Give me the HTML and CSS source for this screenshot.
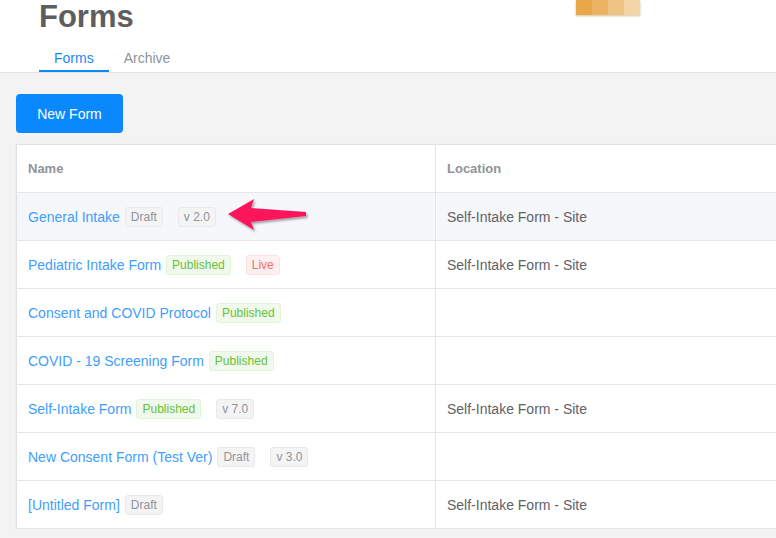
FILE: index.html
```html
<!DOCTYPE html>
<html lang="en">
<head>
<meta charset="UTF-8">
<title>Forms</title>
<link rel="stylesheet" href="styles.css">
</head>
<body>

<div class="header">
  <h1>Forms</h1>
  <div class="tabs">
    <div class="tab active">Forms</div>
    <div class="tab">Archive</div>
  </div>
  <div class="swatches">
    <span class="sw1"></span><span class="sw2"></span><span class="sw3"></span><span class="sw4"></span>
  </div>
</div>

<div class="main">
  <button class="new-btn">New Form</button>

  <div class="table-wrap">
    <table class="forms-table">
      <tr><th class="col-name">Name</th><th>Location</th></tr>
      <tr class="hover">
        <td><a>General Intake</a><span class="tag info">Draft</span><span class="tag info far">v 2.0</span></td>
        <td>Self-Intake Form - Site</td>
      </tr>
      <tr>
        <td><a>Pediatric Intake Form</a><span class="tag success">Published</span><span class="tag danger far">Live</span></td>
        <td>Self-Intake Form - Site</td>
      </tr>
      <tr>
        <td><a>Consent and COVID Protocol</a><span class="tag success">Published</span></td>
        <td></td>
      </tr>
      <tr>
        <td><a>COVID - 19 Screening Form</a><span class="tag success">Published</span></td>
        <td></td>
      </tr>
      <tr>
        <td><a>Self-Intake Form</a><span class="tag success">Published</span><span class="tag info far">v 7.0</span></td>
        <td>Self-Intake Form - Site</td>
      </tr>
      <tr>
        <td><a>New Consent Form (Test Ver)</a><span class="tag info">Draft</span><span class="tag info far">v 3.0</span></td>
        <td></td>
      </tr>
      <tr>
        <td><a>[Untitled Form]</a><span class="tag info">Draft</span></td>
        <td>Self-Intake Form - Site</td>
      </tr>
    </table>

    <svg class="arrow" width="84" height="38" viewBox="0 0 84 38">
      <defs>
        <filter id="sh" x="-20%" y="-30%" width="140%" height="160%">
          <feDropShadow dx="1.5" dy="2" stdDeviation="1.2" flood-color="#000" flood-opacity="0.35"/>
        </filter>
      </defs>
      <path d="M2 17 L28 2 L25 11 L80 15 L80 19 L25 25 L28 33 Z" fill="#fb175c" filter="url(#sh)"/>
    </svg>
  </div>
</div>

</body>
</html>
```

FILE: styles.css
```css
* {
  box-sizing: border-box;
}
body {
  margin: 0;
  background: #f3f3f3;
  font-family: "Liberation Sans", Arial, sans-serif;
  overflow: hidden;
}

.header {
  position: relative;
  display: flow-root;
  background: white;
  border-bottom: 1px solid #e2e2e2;
  padding-left: 39px;
  height: 73px;
}
.header h1 {
  margin: -3px 0 0;
  font-size: 31px;
  line-height: 40px;
  color: #5e5e5e;
}
.tabs {
  display: flex;
}
.tab {
  padding: 9px 15px 0;
  line-height: 24px;
  font-size: 14px;
  color: #909399;
  border-bottom: 2px solid transparent;
}
.tab.active {
  color: #1989fa;
  border-bottom-color: #0a89ff;
}

.swatches {
  position: absolute;
  left: 576px;
  top: 0;
  display: flex;
  box-shadow: 0 1px 2px rgba(150, 100, 20, 0.4);
}
.swatches span {
  width: 16px;
  height: 15px;
}
.sw1 { background: #e8a84a; }
.sw2 { background: #ebb465; }
.sw3 { background: #efc383; }
.sw4 { background: #f4d5a6; }

.main {
  padding: 21px 0 0 16px;
}
.new-btn {
  width: 107px;
  height: 39px;
  border: none;
  border-radius: 4px;
  background: #0a89ff;
  color: white;
  font-family: inherit;
  font-size: 14px;
  padding: 0;
}

.table-wrap {
  position: relative;
  margin-top: 11px;
  width: 840px;
}
.forms-table {
  width: 100%;
  border-collapse: collapse;
  background: white;
  border: 1px solid #dfe1e5;
  box-shadow: 0 1px 2px rgba(0, 0, 0, 0.08);
  font-size: 14px;
}
.forms-table th,
.forms-table td {
  height: 48px;
  padding: 0 11px;
  text-align: left;
  border-bottom: 1px solid #e4e6ea;
  color: #606266;
}
.forms-table th {
  font-size: 13px;
  color: #909399;
}
.forms-table th:first-child,
.forms-table td:first-child {
  width: 419px;
  border-right: 1px solid #e4e6ea;
}
.forms-table tr.hover td {
  background: #f5f7fa;
}
.forms-table a {
  color: #409eff;
}

.tag {
  display: inline-block;
  height: 20px;
  line-height: 18px;
  padding: 0 5px;
  margin-left: 5px;
  font-size: 12px;
  border: 1px solid;
  border-radius: 3px;
  vertical-align: 1px;
}
.tag.far { margin-left: 15px; }
.tag.info {
  background: #f4f4f5;
  border-color: #e9e9eb;
  color: #909399;
}
.tag.success {
  background: #f0f9eb;
  border-color: #e1f3d8;
  color: #67c23a;
}
.tag.danger {
  background: #fef0f0;
  border-color: #fde2e2;
  color: #f56c6c;
}

.arrow {
  position: absolute;
  left: 210px;
  top: 53px;
}
```
